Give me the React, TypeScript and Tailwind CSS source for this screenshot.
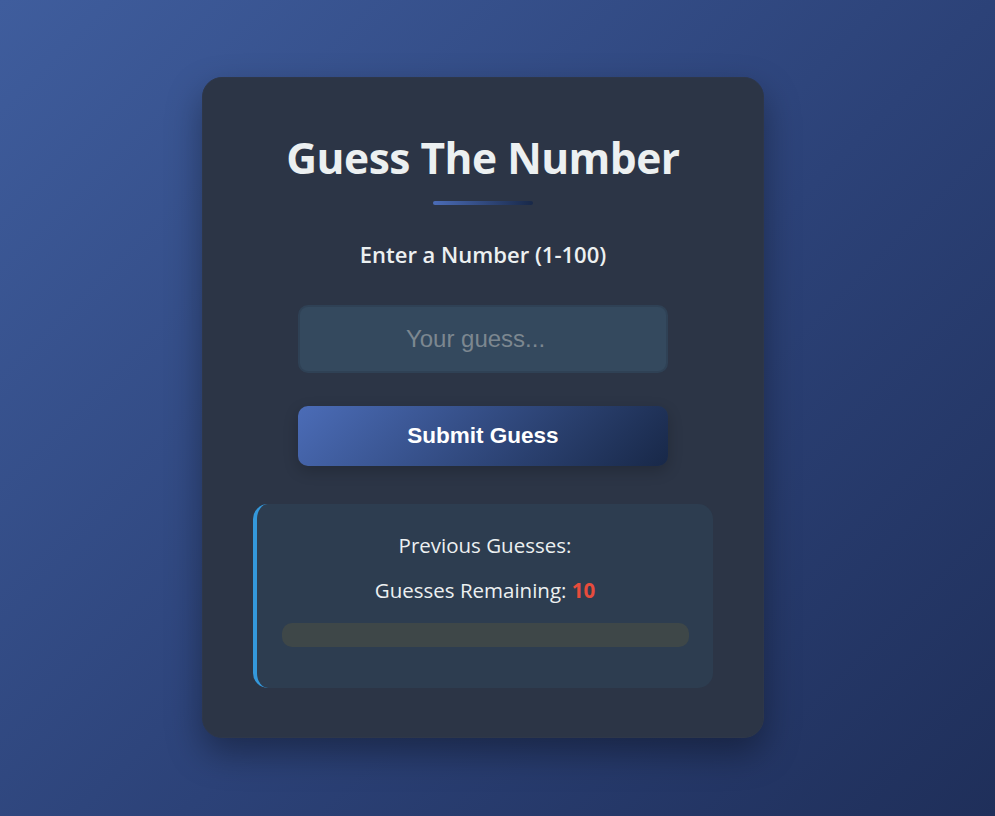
import React, { useState } from "react";

const App: React.FC = () => {
  const [guess, setGuess] = useState<string>("");
  const [guesses, setGuesses] = useState<number[]>([]);
  const remaining = 10 - guesses.length;

  function handleSubmit(): void {
    const n = parseInt(guess, 10);
    if (isNaN(n) || n < 1 || n > 100 || remaining <= 0) return;
    setGuesses([...guesses, n]);
    setGuess("");
  }

  return (
    <div className="min-h-screen w-full bg-[linear-gradient(135deg,#3f5d9d_0%,#2c4278_55%,#1f2f5a_100%)] flex justify-center pr-[29px] pt-[77px] pb-[78px] font-['Open_Sans','Noto_Sans',sans-serif]">
      <div className="w-[562px] h-[661px] rounded-[20px] bg-[#2c3546] border border-[#2e3749] shadow-[0_15px_35px_rgba(0,0,0,0.35)] px-[50px] pt-[56px] flex flex-col items-center">
        {/* Heading */}
        <h1 className="text-[42.5px] leading-[48px] font-bold text-[#ecf0f1] tracking-[-0.5px]">
          Guess The Number
        </h1>
        <div className="mt-[19px] h-[4px] w-[100px] rounded-full bg-[linear-gradient(90deg,#4b6cb7,#182848)]" />

        <p className="mt-[35px] text-[22px] leading-[28px] font-semibold text-[#ecf0f1]">
          Enter a Number (1-100)
        </p>

        {/* Input + button */}
        <input
          type="number"
          value={guess}
          onChange={(e) => setGuess(e.target.value)}
          placeholder="Your guess..."
          className="mt-[37px] w-[370px] h-[68px] rounded-[10px] bg-[#34495e] border-2 border-[#2f4155] text-center text-[24px] text-[#ecf0f1] placeholder:text-[#7c8790] font-['Liberation_Sans',Arial,sans-serif] outline-none"
        />
        <button
          onClick={handleSubmit}
          className="mt-[33px] w-[370px] h-[60px] rounded-[10px] bg-[linear-gradient(135deg,#4b6cb7,#182848)] text-white text-[22.5px] font-bold font-['Liberation_Sans',Arial,sans-serif] shadow-[0_5px_15px_rgba(0,0,0,0.2)]"
        >
          Submit Guess
        </button>

        {/* Results */}
        <div className="mt-[38px] w-[460px] h-[184px] rounded-[15px] bg-[#2d3d50] border-l-4 border-[#3498db] pt-[27px] flex flex-col items-center">
          <p className="text-[20.5px] leading-[28px] text-[#ecf0f1]">
            Previous Guesses: {guesses.join(", ")}
          </p>
          <p className="mt-[17px] text-[20.5px] leading-[28px] text-[#ecf0f1]">
            Guesses Remaining:{" "}
            <span className="font-bold text-[#e74c3c]">{remaining}</span>
          </p>
          <div className="mt-[19px] w-[407px] h-[24px] rounded-[10px] bg-[#3e4748] overflow-hidden">
            <div
              className="h-full bg-[#3498db]"
              style={{ width: `${(guesses.length / 10) * 100}%` }}
            />
          </div>
        </div>
      </div>
    </div>
  );
};

export default App;
